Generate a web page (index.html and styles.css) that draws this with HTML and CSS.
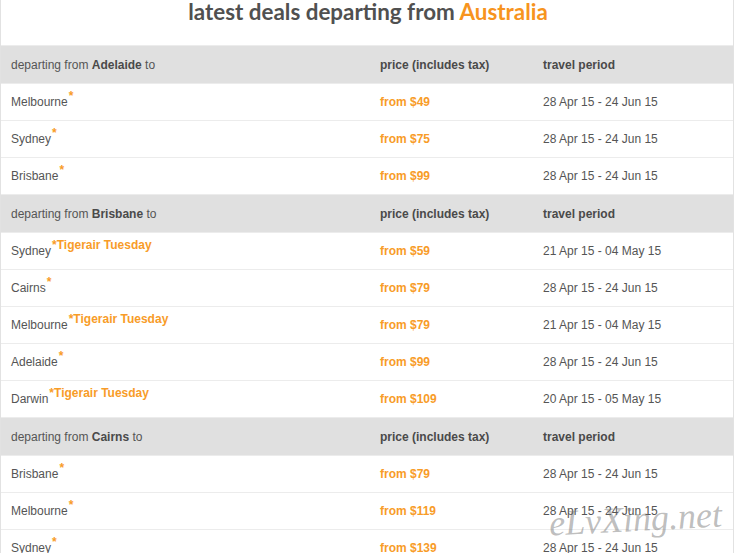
FILE: index.html
```html
<!DOCTYPE html>
<html>
<head>
<meta charset="utf-8">
<link rel="stylesheet" href="styles.css">
</head>
<body>
<div class="page">
  <h1 class="title">latest deals departing from <span class="hl">Australia</span></h1>
  <table class="deals">
    <colgroup><col class="c1"><col class="c2"><col class="c3"></colgroup>
    <tr class="head"><td>departing from <b>Adelaide</b> to</td><td><b>price (includes tax)</b></td><td><b>travel period</b></td></tr>
    <tr><td>Melbourne<sup class="star">*</sup></td><td class="price">from $49</td><td>28 Apr 15 - 24 Jun 15</td></tr>
    <tr><td>Sydney<sup class="star">*</sup></td><td class="price">from $75</td><td>28 Apr 15 - 24 Jun 15</td></tr>
    <tr><td>Brisbane<sup class="star">*</sup></td><td class="price">from $99</td><td>28 Apr 15 - 24 Jun 15</td></tr>
    <tr class="head"><td>departing from <b>Brisbane</b> to</td><td><b>price (includes tax)</b></td><td><b>travel period</b></td></tr>
    <tr><td>Sydney<sup class="star">*Tigerair Tuesday</sup></td><td class="price">from $59</td><td>21 Apr 15 - 04 May 15</td></tr>
    <tr><td>Cairns<sup class="star">*</sup></td><td class="price">from $79</td><td>28 Apr 15 - 24 Jun 15</td></tr>
    <tr><td>Melbourne<sup class="star">*Tigerair Tuesday</sup></td><td class="price">from $79</td><td>21 Apr 15 - 04 May 15</td></tr>
    <tr><td>Adelaide<sup class="star">*</sup></td><td class="price">from $99</td><td>28 Apr 15 - 24 Jun 15</td></tr>
    <tr><td>Darwin<sup class="star">*Tigerair Tuesday</sup></td><td class="price">from $109</td><td>20 Apr 15 - 05 May 15</td></tr>
    <tr class="head"><td>departing from <b>Cairns</b> to</td><td><b>price (includes tax)</b></td><td><b>travel period</b></td></tr>
    <tr><td>Brisbane<sup class="star">*</sup></td><td class="price">from $79</td><td>28 Apr 15 - 24 Jun 15</td></tr>
    <tr><td>Melbourne<sup class="star">*</sup></td><td class="price">from $119</td><td>28 Apr 15 - 24 Jun 15</td></tr>
    <tr><td>Sydney<sup class="star">*</sup></td><td class="price">from $139</td><td>28 Apr 15 - 24 Jun 15</td></tr>
  </table>
  <div class="watermark">eLvXing.net</div>
</div>
</body>
</html>
```
FILE: styles.css
```css
html, body {
  margin: 0;
  padding: 0;
  background: #fff;
  overflow: hidden;
}
.page {
  position: relative;
  width: 732px;
  height: 553px;
  border-left: 1px solid #e2e2e2;
  border-right: 1px solid #e2e2e2;
  font-family: "Liberation Sans", Arial, sans-serif;
  color: #555;
  overflow: hidden;
}
.title {
  margin: 0;
  height: 45px;
  box-sizing: border-box;
  text-align: center;
  font-family: Lato, "Open Sans", sans-serif;
  font-weight: 700;
  font-size: 22.4px;
  line-height: 27px;
  margin-top: -2px;
  padding-bottom: 0;
  color: #505050;
  padding-left: 2px;
}
.title .hl { color: #f7941e; }
.deals {
  width: 100%;
  border-collapse: collapse;
  font-size: 12px;
  border-top: 1px solid #ececec;
  margin-top: 2px;
}
.c1 { width: 369px; }
.c2 { width: 163px; }
.deals td {
  padding: 0 0 0 10px;
  height: 36px;
  border-bottom: 1px solid #ececec;
  white-space: nowrap;
  vertical-align: middle;
  line-height: 14px;
}
.deals tr.head td {
  background: #e0e0e0;
  height: 37px;
  color: #555;
}
.deals b { font-weight: 700; color: #4a4a4a; }
.price {
  color: #f89c28;
  font-weight: 700;
}
.star {
  color: #f89c28;
  font-weight: 700;
  font-size: 12px;
  vertical-align: 6px;
  line-height: 0;
  margin-left: 1px;
}
.watermark {
  position: absolute;
  left: 548px;
  top: 499px;
  font-family: "Liberation Serif", serif;
  font-style: italic;
  font-size: 36px;
  line-height: 40px;
  color: rgba(110, 110, 110, 0.45);
  transform: rotate(-3deg);
  pointer-events: none;
}
```
